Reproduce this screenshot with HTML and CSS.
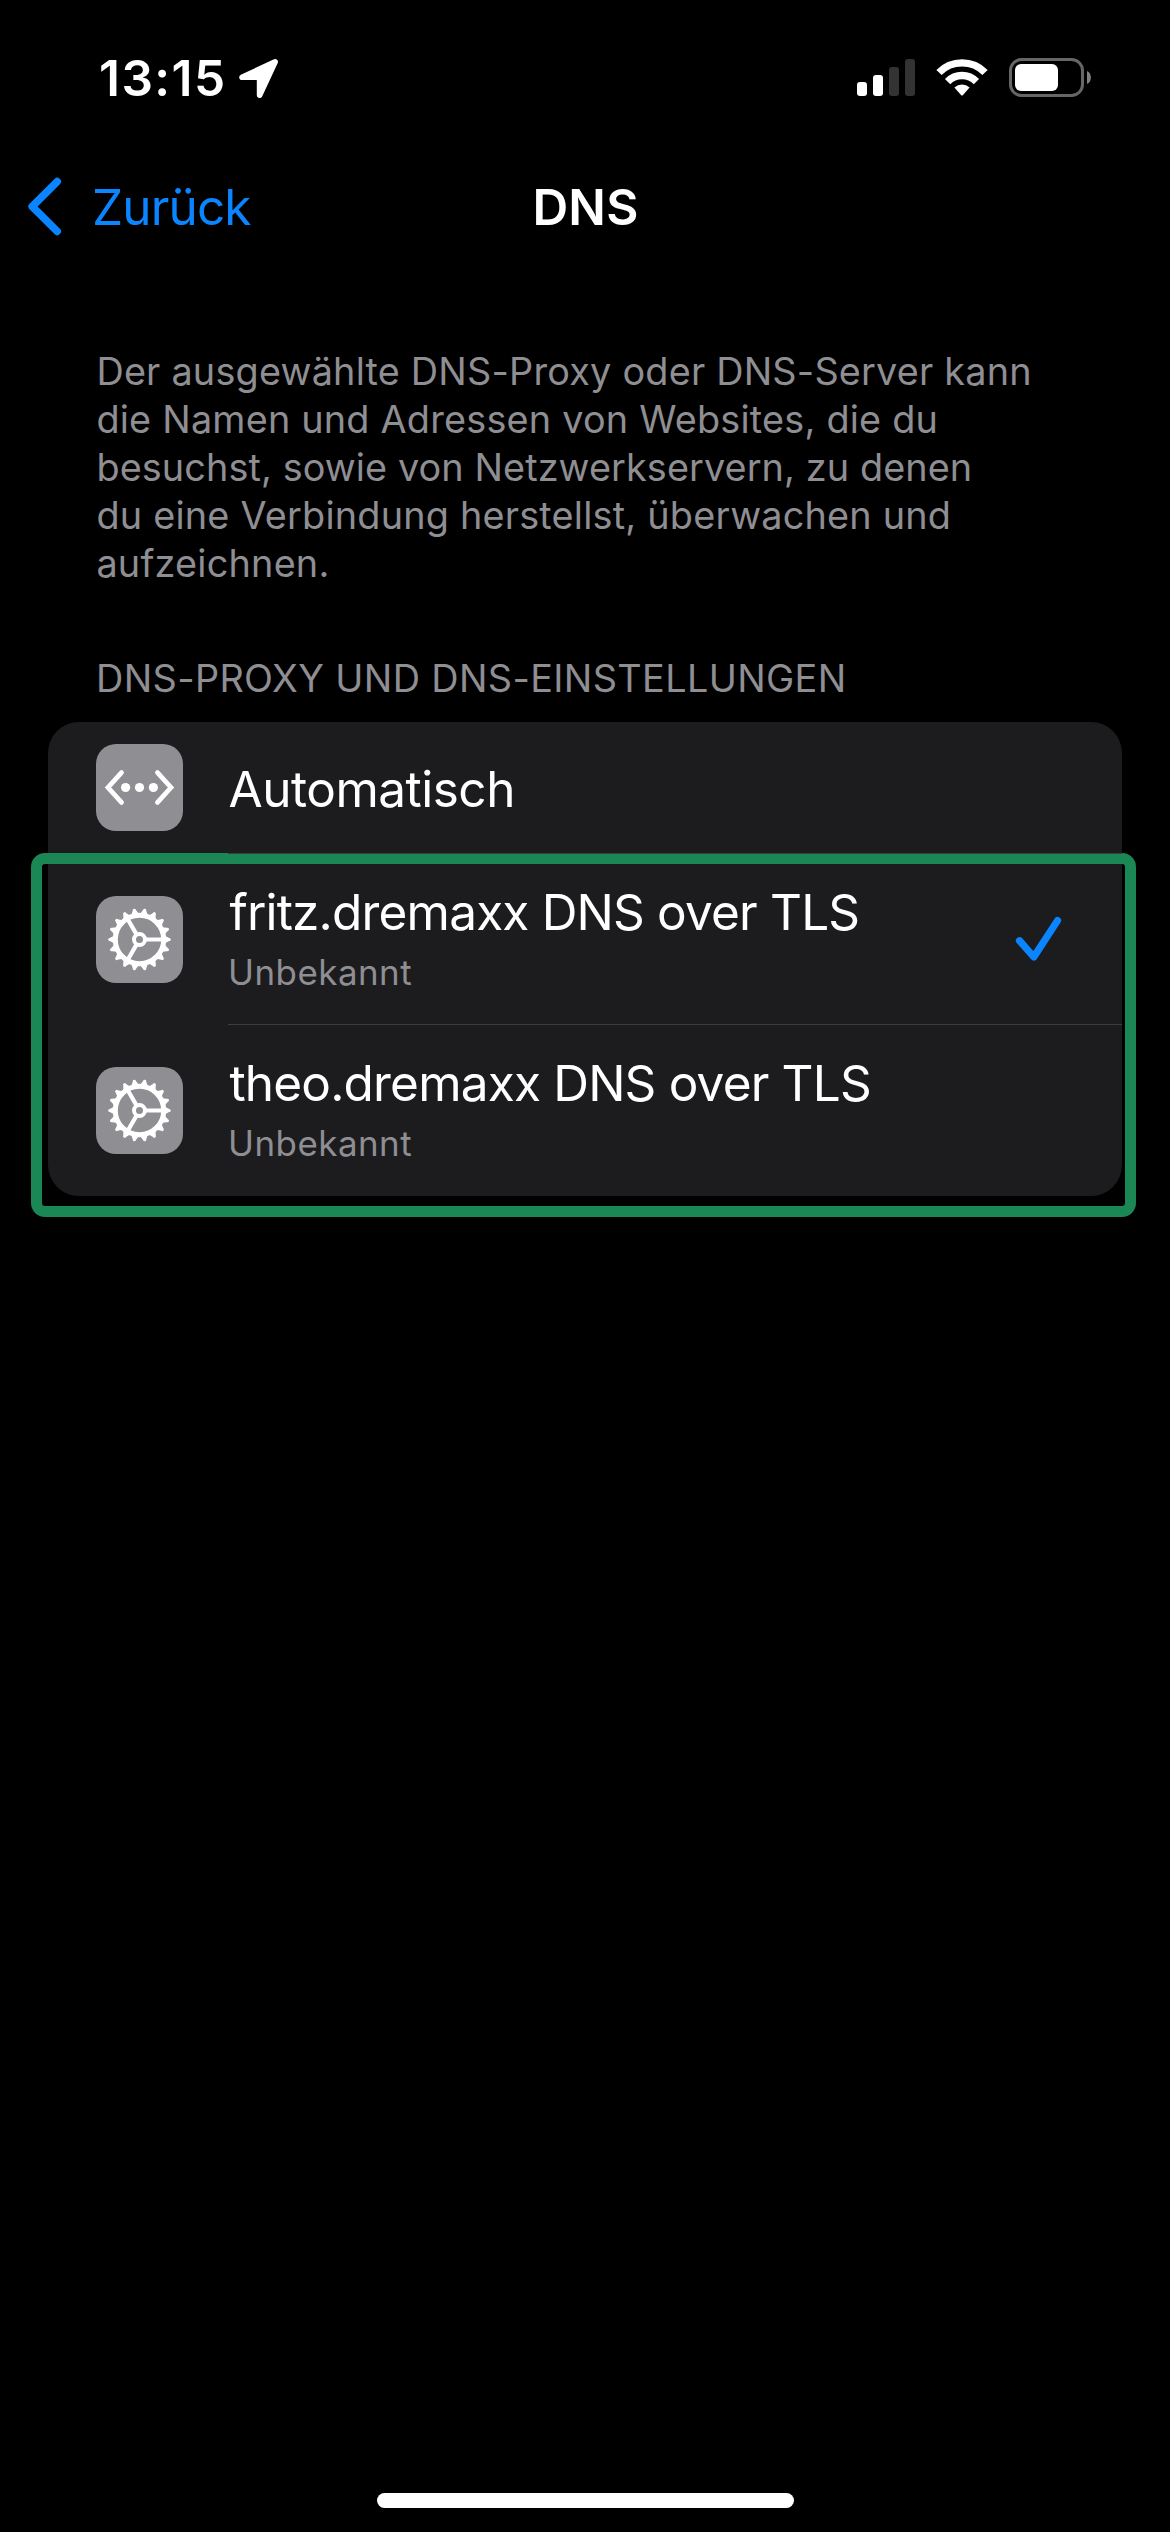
FILE: index.html
```html
<!DOCTYPE html>
<html lang="de">
<head>
<meta charset="utf-8">
<title>DNS</title>
<link rel="stylesheet" href="styles.css">
</head>
<body>
<svg class="sprite" aria-hidden="true">
  <symbol id="gear" viewBox="0 0 87 87">
    <g fill="none" stroke="#fff">
      <circle cx="43.5" cy="43.5" r="24.2" stroke-width="5"/>
      <circle cx="43.5" cy="43.5" r="5.5" stroke-width="4"/>
      <path d="M50 43.5H67M40.2 37.9L31.2 22.2M40.2 49.1L31.2 64.8" stroke-width="4.2"/>
    </g>
    <defs>
      <g id="teeth" fill="#fff">
        <path id="tooth" d="M69 39.7L73.2 41.9A1.6 1.6 0 0 1 73.2 45.1L69 47.3Z"/>
        <use href="#tooth" transform="rotate(20 43.5 43.5)"/>
        <use href="#tooth" transform="rotate(40 43.5 43.5)"/>
      </g>
    </defs>
    <use href="#teeth"/>
    <use href="#teeth" transform="rotate(60 43.5 43.5)"/>
    <use href="#teeth" transform="rotate(120 43.5 43.5)"/>
    <use href="#teeth" transform="rotate(180 43.5 43.5)"/>
    <use href="#teeth" transform="rotate(240 43.5 43.5)"/>
    <use href="#teeth" transform="rotate(300 43.5 43.5)"/>
  </symbol>
</svg>

<div class="screen">
  <header class="status">
    <div class="status-left">
      <span class="time">13:15</span>
      <svg class="location" width="44" height="60" viewBox="0 0 44 60">
        <path d="M6 29.2L39.2 13.9L23.6 47.2V29.2Z" fill="#fff" stroke="#fff" stroke-width="5.6" stroke-linejoin="round"/>
      </svg>
    </div>
    <div class="status-right">
      <svg width="58" height="60" viewBox="0 0 58 60">
        <g fill="#fff">
          <rect x="0" y="34" width="10" height="14" rx="3"/>
          <rect x="16" y="27" width="10" height="21" rx="3"/>
        </g>
        <g fill="#333">
          <rect x="32" y="19" width="10" height="29" rx="3"/>
          <rect x="48" y="11" width="10" height="37" rx="3"/>
        </g>
      </svg>
      <svg width="52" height="60" viewBox="0 0 52 60">
        <g fill="none" stroke="#fff">
          <path d="M3 24.5A32.4 32.4 0 0 1 49 24.5" stroke-width="7.4"/>
          <path d="M11.6 33.6A20 20 0 0 1 40.4 33.6" stroke-width="7.4"/>
        </g>
        <path d="M18.4 39.4A11.2 11.2 0 0 1 33.6 39.4L26.8 47.2Q26 48 25.2 47.2Z" fill="#fff"/>
      </svg>
      <svg width="83" height="60" viewBox="0 0 83 60">
        <rect x="1.5" y="11.5" width="72" height="36" rx="11" fill="none" stroke="#666" stroke-width="3"/>
        <rect x="6" y="16" width="43" height="27" rx="6" fill="#fff"/>
        <path d="M78 23C83.2 25 83.2 34 78 36Z" fill="#808080"/>
      </svg>
    </div>
  </header>

  <nav class="nav">
    <a class="back">
      <svg width="40" height="60" viewBox="0 0 40 60">
        <path d="M29.2 4.6L4.2 29.5L29.2 54.4" fill="none" stroke="#0a84ff" stroke-width="7.6" stroke-linecap="round" stroke-linejoin="round"/>
      </svg>
      <span>Zurück</span>
    </a>
    <h1 class="title">DNS</h1>
  </nav>

  <main class="content">
    <p class="intro">Der ausgewählte DNS-Proxy oder DNS-Server kann<br>
      die Namen und Adressen von Websites, die du<br>
      <span class="tighter">besuchst, sowie von Netzwerkservern, zu denen</span><br>
      du eine Verbindung herstellst, überwachen und<br>
      aufzeichnen.</p>
    <h2 class="group-title">DNS-PROXY UND DNS-EINSTELLUNGEN</h2>

    <section class="group">
      <div class="row row-single">
        <svg class="icon" viewBox="0 0 87 87">
          <g fill="none" stroke="#fff" stroke-width="4.8" stroke-linecap="round">
            <path d="M25.5 28.6L12 43.5L25.5 58.4"/>
            <path d="M61.5 28.6L75 43.5L61.5 58.4"/>
          </g>
          <g fill="#fff">
            <circle cx="29.6" cy="43.5" r="4.6"/>
            <circle cx="43.5" cy="43.5" r="4.6"/>
            <circle cx="57.4" cy="43.5" r="4.6"/>
          </g>
        </svg>
        <div class="row-body">
          <div class="name name-short">Automatisch</div>
        </div>
      </div>
      <div class="row">
        <svg class="icon"><use href="#gear"/></svg>
        <div class="row-body">
          <div class="labels">
            <div class="name">fritz.dremaxx DNS over TLS</div>
            <div class="detail">Unbekannt</div>
          </div>
          <svg class="check" width="48" height="46" viewBox="0 0 48 46">
            <path d="M4.5 24.7L18.8 41L42.5 4.6" fill="none" stroke="#0a84ff" stroke-width="7.2" stroke-linecap="round" stroke-linejoin="round"/>
          </svg>
        </div>
      </div>
      <div class="row">
        <svg class="icon"><use href="#gear"/></svg>
        <div class="row-body">
          <div class="labels">
            <div class="name">theo.dremaxx DNS over TLS</div>
            <div class="detail">Unbekannt</div>
          </div>
        </div>
      </div>
      <div class="highlight"></div>
    </section>
  </main>

  <div class="home-indicator"></div>
</div>
</body>
</html>
```

FILE: styles.css
```css
* { box-sizing: border-box; }

body {
  margin: 0;
  background: #000;
  color: #fff;
  font-family: Inter, "Liberation Sans", sans-serif;
}

.sprite { display: block; width: 0; height: 0; }
svg { display: block; flex: none; }

.screen {
  display: flex;
  flex-direction: column;
  width: 1170px;
  height: 2532px;
}

/* Status bar */
.status {
  display: flex;
  justify-content: space-between;
  height: 141px;
  padding: 48px 78px 0 99px;
}
.status-left, .status-right { display: flex; }
.status-left { gap: 9px; }
.status-right { gap: 22px; }
.status-right svg:nth-child(2) { margin: 0 -1px 0 -1px; }
.time {
  width: 128px;
  font-size: 49.5px;
  font-weight: 600;
  line-height: 60px;
  letter-spacing: 1.46px;
}

/* Navigation bar */
.nav {
  display: grid;
  grid-template-columns: 1fr auto 1fr;
  align-items: center;
  height: 132px;
  padding: 0 28px;
  line-height: 60px;
  font-size: 49.5px;
}
.back {
  display: flex;
  gap: 24px;
  color: #0a84ff;
  letter-spacing: -0.85px;
}
.title {
  margin: 0 0 0 1px;
  font-size: inherit;
  font-weight: 600;
  letter-spacing: 0.23px;
}

/* Content */
.content { padding: 74px 48px 0; }
.intro, .group-title {
  margin: 0 0 0 48.4px;
  color: #8e8e93;
  font-size: 37.8px;
  font-weight: 400;
  line-height: 48px;
  white-space: nowrap;
}
.intro { letter-spacing: 0.21px; }
.tighter { letter-spacing: 0.1px; }
.group-title {
  margin: 67px 0 20px 48px;
  letter-spacing: 0.376px;
}

/* Settings list */
.group {
  position: relative;
  border-radius: 31px;
  background: #1c1c1e;
}
.row {
  display: flex;
  align-items: center;
  height: 171px;
  padding-left: 48px;
}
.row-single { height: 132px; }
.icon {
  width: 87px;
  height: 87px;
  margin-bottom: 1px;
  border-radius: 20px;
  background: #8e8e93;
}
.row-body {
  position: relative;
  z-index: 2;
  display: flex;
  flex: 1;
  align-items: center;
  justify-content: space-between;
  align-self: stretch;
  margin-left: 45px;
  padding-right: 59px;
  border-bottom: 1px solid #3d3d40;
}
.row:nth-child(3) .row-body { border-bottom-color: transparent; }
.labels { margin-bottom: 2px; }
.name {
  margin-left: 1.4px;
  font-size: 49.5px;
  line-height: 60px;
  letter-spacing: -0.81px;
}
.name-short {
  margin: 3px 0 0 .6px;
  letter-spacing: -0.5px;
}
.detail {
  margin-top: 7px;
  color: #8e8e93;
  font-size: 34.9px;
  line-height: 46px;
  letter-spacing: 0.49px;
}

/* Marked area around the two custom profiles */
.highlight {
  position: absolute;
  z-index: 1;
  top: 131px;
  right: -14px;
  left: -17px;
  height: 364px;
  border: 11px solid #1a8754;
  border-radius: 14px;
}

.home-indicator {
  align-self: center;
  width: 417px;
  height: 15px;
  margin-top: auto;
  margin-bottom: 24px;
  border-radius: 8px;
  background: #fff;
}
```
